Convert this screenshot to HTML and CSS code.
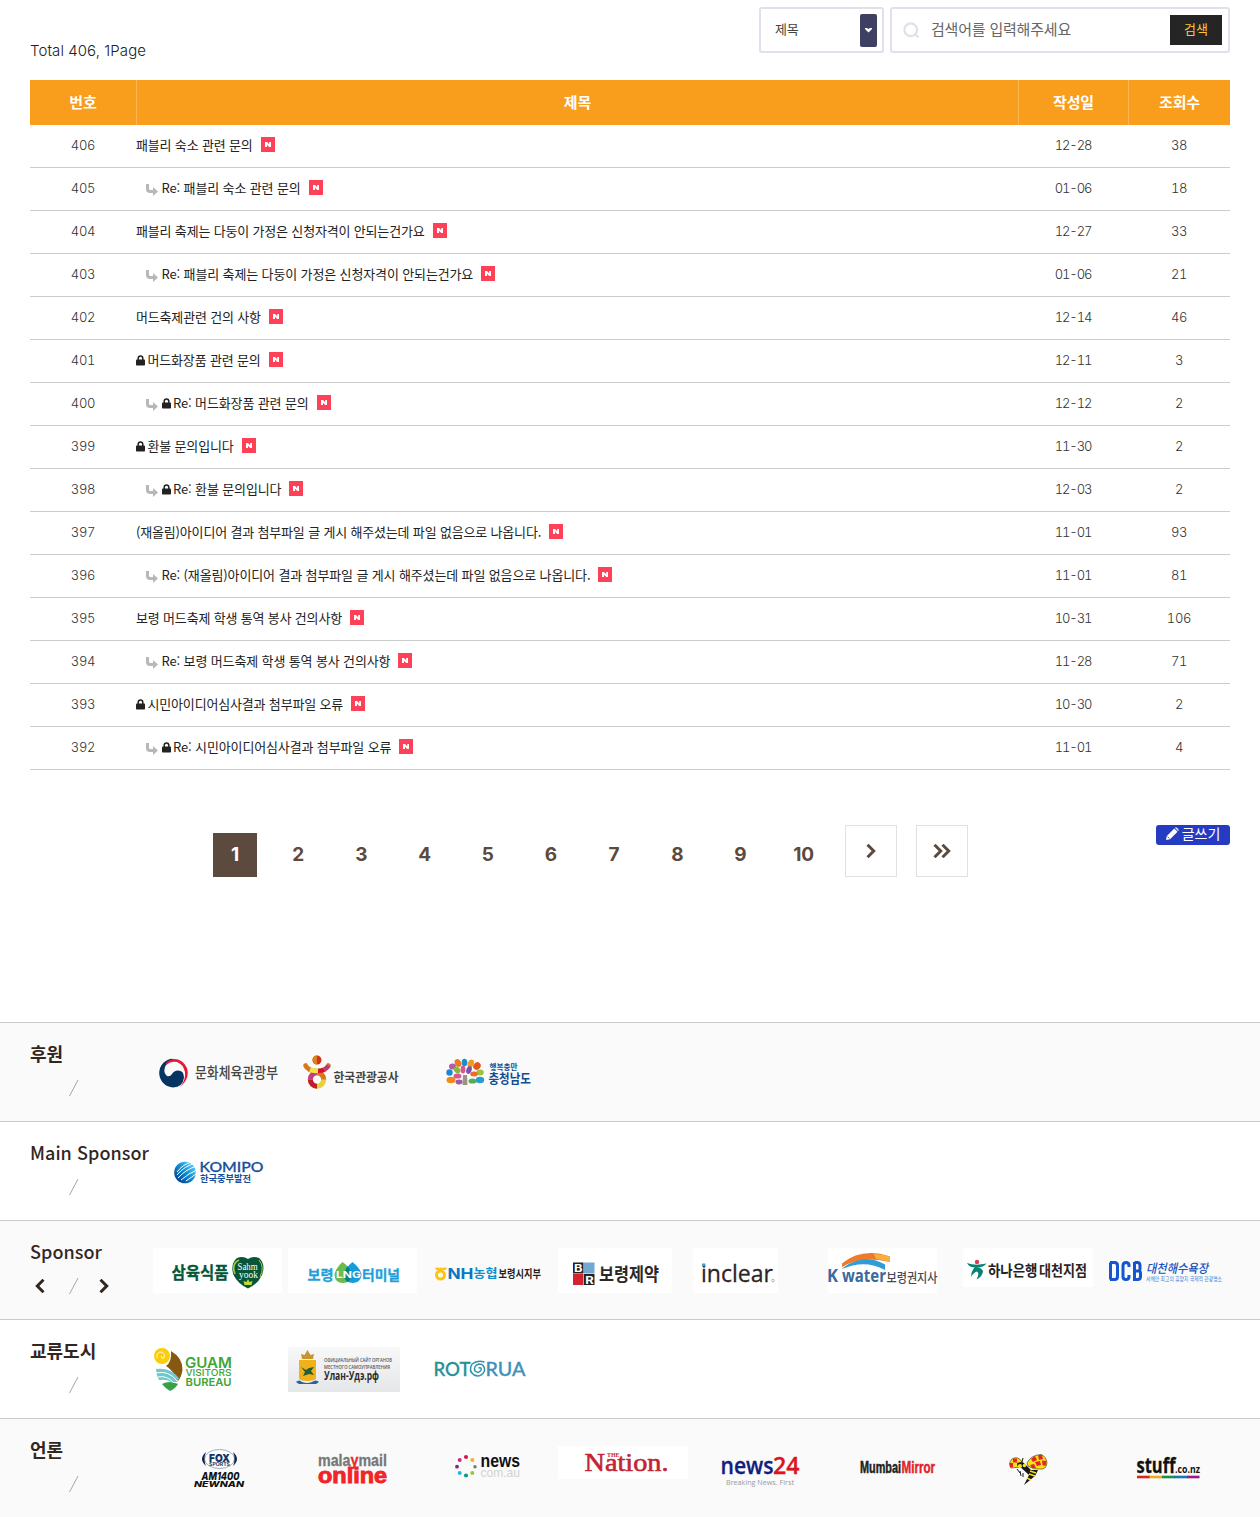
FILE: index.html
```html
<!DOCTYPE html>
<html lang="ko">
<head>
<meta charset="utf-8">
<title>게시판</title>
<link rel="stylesheet" href="styles.css">
</head>
<body>
<svg class="defs" width="0" height="0">
  <symbol id="new" viewBox="0 0 14 15"><rect width="14" height="15" fill="#ff4157"/><path d="M4 10V5h2l2.200 2.300V5H10v5H8.200L6 7.700V10z" fill="#fff"/></symbol>
  <symbol id="lock" viewBox="0 0 9 11"><path d="M2.200 5V3.200a2.300 2.300 0 0 1 4.600 0V5" fill="none" stroke="#222" stroke-width="1.500"/><rect x="0" y="4.600" width="9" height="5.900" rx=".8" fill="#222"/></symbol>
  <symbol id="reply" viewBox="0 0 12 12"><path d="M0 0h3v4.500q0 1.500 1.500 1.500H7V3l5 4.600L7 12V9H4Q0 9 0 5z" fill="#b8b8b8"/></symbol>
  <symbol id="slash" viewBox="0 0 10 16"><path d="M.5 16L9 0" stroke="#aaa5a2" stroke-width="1" fill="none"/></symbol>
  <symbol id="chev" viewBox="0 0 10 14"><path d="M1.500 .8L7.700 7L1.500 13.200" fill="none" stroke="currentColor" stroke-width="3"/></symbol>
</svg>

<main class="board">
  <div class="board-top">
    <p class="total">Total 406, 1Page</p>
    <form class="search">
      <div class="select"><span>제목</span><i class="handle"><svg width="7" height="5" viewBox="0 0 7 5"><path d="M0 0h2l1.500 1L5 0h2v1L3.500 4.500L0 1z" fill="#fff"/></svg></i></div>
      <div class="field">
        <svg width="17" height="17" viewBox="0 0 17 17"><circle cx="7.700" cy="7.700" r="6.300" fill="none" stroke="#e1dfec" stroke-width="2.200"/><path d="M11.500 11.500l4 4" stroke="#e1dfec" stroke-width="2.200"/></svg>
        <span class="hint">검색어를 입력해주세요</span>
        <button type="button">검색</button>
      </div>
    </form>
  </div>

  <table class="list">
    <thead><tr><th class="c-no">번호</th><th>제목</th><th class="c-date">작성일</th><th class="c-hit">조회수</th></tr></thead>
    <tbody>
      <tr><td>406</td><td><div class="t">패블리 숙소 관련 문의<svg class="new"><use href="#new"/></svg></div></td><td>12-28</td><td>38</td></tr>
      <tr><td>405</td><td><div class="t re"><svg class="reply"><use href="#reply"/></svg>Re: 패블리 숙소 관련 문의<svg class="new"><use href="#new"/></svg></div></td><td>01-06</td><td>18</td></tr>
      <tr><td>404</td><td><div class="t">패블리 축제는 다둥이 가정은 신청자격이 안되는건가요<svg class="new"><use href="#new"/></svg></div></td><td>12-27</td><td>33</td></tr>
      <tr><td>403</td><td><div class="t re"><svg class="reply"><use href="#reply"/></svg>Re: 패블리 축제는 다둥이 가정은 신청자격이 안되는건가요<svg class="new"><use href="#new"/></svg></div></td><td>01-06</td><td>21</td></tr>
      <tr><td>402</td><td><div class="t">머드축제관련 건의 사항<svg class="new"><use href="#new"/></svg></div></td><td>12-14</td><td>46</td></tr>
      <tr><td>401</td><td><div class="t"><svg class="lock"><use href="#lock"/></svg>머드화장품 관련 문의<svg class="new"><use href="#new"/></svg></div></td><td>12-11</td><td>3</td></tr>
      <tr><td>400</td><td><div class="t re"><svg class="reply"><use href="#reply"/></svg><svg class="lock"><use href="#lock"/></svg>Re: 머드화장품 관련 문의<svg class="new"><use href="#new"/></svg></div></td><td>12-12</td><td>2</td></tr>
      <tr><td>399</td><td><div class="t"><svg class="lock"><use href="#lock"/></svg>환불 문의입니다<svg class="new"><use href="#new"/></svg></div></td><td>11-30</td><td>2</td></tr>
      <tr><td>398</td><td><div class="t re"><svg class="reply"><use href="#reply"/></svg><svg class="lock"><use href="#lock"/></svg>Re: 환불 문의입니다<svg class="new"><use href="#new"/></svg></div></td><td>12-03</td><td>2</td></tr>
      <tr><td>397</td><td><div class="t">(재올림)아이디어 결과 첨부파일 글 게시 해주셨는데 파일 없음으로 나옵니다.<svg class="new"><use href="#new"/></svg></div></td><td>11-01</td><td>93</td></tr>
      <tr><td>396</td><td><div class="t re"><svg class="reply"><use href="#reply"/></svg>Re: (재올림)아이디어 결과 첨부파일 글 게시 해주셨는데 파일 없음으로 나옵니다.<svg class="new"><use href="#new"/></svg></div></td><td>11-01</td><td>81</td></tr>
      <tr><td>395</td><td><div class="t">보령 머드축제 학생 통역 봉사 건의사항<svg class="new"><use href="#new"/></svg></div></td><td>10-31</td><td>106</td></tr>
      <tr><td>394</td><td><div class="t re"><svg class="reply"><use href="#reply"/></svg>Re: 보령 머드축제 학생 통역 봉사 건의사항<svg class="new"><use href="#new"/></svg></div></td><td>11-28</td><td>71</td></tr>
      <tr><td>393</td><td><div class="t"><svg class="lock"><use href="#lock"/></svg>시민아이디어심사결과 첨부파일 오류<svg class="new"><use href="#new"/></svg></div></td><td>10-30</td><td>2</td></tr>
      <tr><td>392</td><td><div class="t re"><svg class="reply"><use href="#reply"/></svg><svg class="lock"><use href="#lock"/></svg>Re: 시민아이디어심사결과 첨부파일 오류<svg class="new"><use href="#new"/></svg></div></td><td>11-01</td><td>4</td></tr>
    </tbody>
  </table>

  <div class="board-foot">
    <nav class="pager">
      <b class="on">1</b><b>2</b><b>3</b><b>4</b><b>5</b><b>6</b><b>7</b><b>8</b><b>9</b><b>10</b>
      <a class="step"><svg width="10" height="14"><use href="#chev"/></svg></a>
      <a class="step"><svg width="18" height="14" viewBox="0 0 18 14"><path d="M1.500 .8L7.700 7L1.500 13.200M9.500 .8L15.700 7L9.500 13.200" fill="none" stroke="#5d4a3e" stroke-width="3"/></svg></a>
    </nav>
    <a class="write"><svg width="13" height="13" viewBox="0 0 13 13"><path d="M0 13l.8-4L8.300 1.500l3.200 3.200L4 12.200zM9 .8q.8-1 1.800 0l1.400 1.400q1 .9 0 1.800z" fill="#fff"/><path d="M1.500 9.500l2 2" stroke="#253bc1" stroke-width=".7"/></svg>글쓰기</a>
  </div>
</main>

<footer class="partners">
  <section class="band gray">
    <div class="label"><h2>후원</h2><div class="nav"><svg class="slash"><use href="#slash"/></svg></div></div>
    <div class="logos">
      <svg class="logo" viewBox="0 0 135 98">
        <path d="M17 36A14.500 14.500 0 0 0 20 64.500Q30 64 31 54.500Q31 47.500 25 47.500Q21 47.500 19 51Q17 54 14 53Q10 50 12 44Q14 39 21 36.500Q19 35.500 17 36z" fill="#06335f"/>
        <path d="M13 40Q20 33 29 38.500Q36 44 34.500 53Q33 59 27 64Q33 57 32 49Q30 41 24 39Q18 37.500 13 42z" fill="#e71939"/>
        <text x="42" y="55" textLength="83" font-size="15" fill="#444" font-weight="500" lengthAdjust="spacingAndGlyphs">문화체육관광부</text>
      </svg>
      <svg class="logo" viewBox="0 0 135 98">
        <circle cx="29" cy="37" r="4.500" fill="#d9301f"/><path d="M29 32.500a4.500 4.500 0 0 0 0 9z" fill="#d98316"/>
        <circle cx="29" cy="56.500" r="6.700" fill="none" stroke="#e8d13a" stroke-width="5"/>
        <path d="M29 49.800a6.700 6.700 0 0 0-6.700 6.700" fill="none" stroke="#c63a87" stroke-width="5"/><path d="M22.300 56.500a6.700 6.700 0 0 0 6.700 6.700" fill="none" stroke="#c11d28" stroke-width="5"/><path d="M35.700 56.500a6.700 6.700 0 0 0-6.700-6.700" fill="none" stroke="#d9771a" stroke-width="5"/>
        <path d="M17.500 42.500Q20 48 29 48Q38 48 40.500 42.500" fill="none" stroke="#d9771a" stroke-width="4.600" stroke-linecap="round"/>
        <path d="M22 46.800Q26 48 30 48" stroke="#efe244" stroke-width="4.600" fill="none"/><path d="M30 48Q34 48 36 46.500" stroke="#d2122c" stroke-width="4.600" fill="none"/><path d="M36.500 46.300Q39 45 40.500 42.500" stroke="#b43a86" stroke-width="4.300" fill="none"/>
        <text x="45.500" y="59" textLength="65" font-size="12.500" fill="#444" font-weight="700" lengthAdjust="spacingAndGlyphs">한국관광공사</text>
      </svg>
      <svg class="logo" viewBox="0 0 135 98">
        <path d="M40 52l4 0 .5 10h-5z" fill="#9b9484"/>
        <ellipse cx="26.500" cy="49.500" rx="3.200" ry="3.200" fill="#1889d4"/><ellipse cx="28" cy="57" rx="4.500" ry="3.200" fill="#f18b19"/><ellipse cx="29.500" cy="43.500" rx="3.500" ry="3" fill="#b25ca7"/>
        <ellipse cx="35" cy="40" rx="3.200" ry="4" fill="#ec7a25" transform="rotate(-25 35 40)"/><ellipse cx="41.500" cy="39.500" rx="2.800" ry="3.800" fill="#198fcf"/><ellipse cx="48" cy="40.500" rx="3" ry="4" fill="#f19a21" transform="rotate(25 48 40)"/>
        <ellipse cx="54" cy="43" rx="3.500" ry="4" fill="#e2571e" transform="rotate(40 54 43)"/><ellipse cx="57" cy="49.500" rx="3.800" ry="3" fill="#9cc33b"/><ellipse cx="57" cy="57" rx="4.200" ry="3.200" fill="#2b9ad1"/>
        <ellipse cx="34" cy="47" rx="3.800" ry="2.800" fill="#86b83c" transform="rotate(40 34 47)"/><ellipse cx="40" cy="46.500" rx="2.400" ry="4" fill="#d65698"/><ellipse cx="46" cy="47" rx="2.600" ry="4" fill="#7755a5" transform="rotate(20 46 47)"/><ellipse cx="51" cy="51" rx="3.800" ry="2.500" fill="#ed6b2b"/><ellipse cx="34.500" cy="53" rx="4" ry="2.600" fill="#d65698"/><ellipse cx="49.500" cy="58" rx="4" ry="2.600" fill="#55ac52"/><ellipse cx="36" cy="59" rx="3.500" ry="2.400" fill="#9d5aa6"/>
        <text x="66.500" y="46.500" textLength="28" font-size="8" fill="#144b91" font-weight="700" lengthAdjust="spacingAndGlyphs">행복충만</text>
        <text x="65.500" y="59.500" textLength="42.500" font-size="13" fill="#144b91" font-weight="700" lengthAdjust="spacingAndGlyphs">충청남도</text>
      </svg>
    </div>
  </section>

  <section class="band">
    <div class="label"><h2 class="en">Main Sponsor</h2><div class="nav"><svg class="slash"><use href="#slash"/></svg></div></div>
    <div class="logos">
      <svg class="logo" viewBox="0 0 135 98">
        <defs><linearGradient id="kg" x1="1" y1="0" x2="0" y2="1"><stop offset=".1" stop-color="#5fd0f5"/><stop offset=".5" stop-color="#0a8bd2"/><stop offset=".9" stop-color="#073d8b"/></linearGradient></defs>
        <circle cx="32" cy="50.500" r="10.800" fill="url(#kg)"/>
        <g stroke="#fff" stroke-width="1" fill="none"><path d="M24 50Q30 42 39 40M24 53Q31 44 43 41M25 56Q33 47 44 44M28 58Q36 51 44 48M33 59Q39 55 44 51"/></g>
        <text x="46.500" y="50.300" class="la" textLength="64" font-size="14" fill="#164f9c" stroke="#164f9c" stroke-width=".3" font-weight="500" lengthAdjust="spacingAndGlyphs">KOMIPO</text>
        <text x="47" y="59.500" textLength="51" font-size="9.500" fill="#164f9c" font-weight="700" lengthAdjust="spacingAndGlyphs">한국중부발전</text>
      </svg>
    </div>
  </section>

  <section class="band gray">
    <div class="label"><h2 class="en">Sponsor</h2><div class="nav"><svg class="arrow prev"><use href="#chev"/></svg><svg class="slash"><use href="#slash"/></svg><svg class="arrow"><use href="#chev"/></svg></div></div>
    <div class="logos">
      <svg class="logo" viewBox="0 0 135 98">
        <rect y="27" width="129" height="45" fill="#fff"/>
        <text x="18.500" y="58" textLength="57" font-size="17" fill="#05573a" stroke="#05573a" stroke-width=".3" font-weight="700" lengthAdjust="spacingAndGlyphs">삼육식품</text>
        <path d="M95 38Q90 34.500 84 37Q77 43 80.500 54Q85 63 95 67.500Q105 63 109 54Q113 43 106 37Q100 34.500 95 38z" fill="#07563a"/>
        <path d="M82 53Q78 43 86 39" fill="none" stroke="#a7ce3a" stroke-width="1.600"/><path d="M106 39Q112 46 107 56" fill="none" stroke="#a7ce3a" stroke-width="1"/>
        <text x="84.500" y="48.500" class="se" textLength="20" font-size="11" fill="#fff" lengthAdjust="spacingAndGlyphs">Sahm</text><text x="86" y="57" class="se" textLength="19" font-size="11" fill="#fff" lengthAdjust="spacingAndGlyphs">yook</text>
        <path d="M95 58l1.500 3 3-1-1 4h-7l-1-4 3 1z" fill="#c5d92d"/>
      </svg>
      <svg class="logo" viewBox="0 0 135 98">
        <rect y="27" width="129" height="45" fill="#fff"/>
        <path d="M54.500 41Q47 48 46.500 54Q47 62 55 62Q63 62 64 54Q63 47 54.500 41z" fill="#6abb50"/><path d="M64.500 41Q56 48 56 54Q57 62 65 62Q73 61 73.500 54Q73 48 64.500 41z" fill="#169cdb"/><path d="M59.500 45Q63 50 63.500 54Q63 59 59.500 61Q56 58 56 54Q57 49 59.500 45z" fill="#087f81"/>
        <text x="19.500" y="58.500" textLength="26" font-size="14" fill="#239edb" font-weight="700" stroke="#239edb" stroke-width=".3" lengthAdjust="spacingAndGlyphs">보령</text><text x="74" y="58.500" textLength="38" font-size="14" fill="#239edb" font-weight="700" stroke="#239edb" stroke-width=".3" lengthAdjust="spacingAndGlyphs">터미널</text>
        <text x="48" y="56.500" class="in" textLength="25" font-size="9.500" fill="#fff" font-weight="700" lengthAdjust="spacingAndGlyphs">LNG</text>
      </svg>
      <svg class="logo" viewBox="0 0 135 98">
        <circle cx="17.500" cy="54" r="4" fill="none" stroke="#fbc40d" stroke-width="3"/><path d="M12 46l2 1.200 1-1.200 1.800 1.500L18 46l1.200 1.500L21 46l.8 1.200L24 46l-1 3H13z" fill="#fbc40d"/>
        <text x="24.500" y="57.500" class="in" textLength="26" font-size="14" fill="#0878c1" font-weight="700" lengthAdjust="spacingAndGlyphs">NH</text><text x="50.500" y="57" textLength="24" font-size="12.500" fill="#1290cd" font-weight="700" lengthAdjust="spacingAndGlyphs">농협</text>
        <text x="75.500" y="57" textLength="42.500" font-size="11" fill="#222" font-weight="700" lengthAdjust="spacingAndGlyphs">보령시지부</text>
      </svg>
      <svg class="logo" viewBox="0 0 135 98">
        <rect y="27" width="114" height="45" fill="#fff"/>
        <rect x="15" y="41.500" width="10.500" height="11" fill="#262122"/><rect x="26" y="41.500" width="10.500" height="11" fill="#73a8d2"/><rect x="15" y="53" width="10.500" height="11" fill="#d2232e"/><rect x="26" y="53" width="10.500" height="11" fill="#262122"/>
        <text x="16" y="50.800" class="in" font-size="10.500" font-weight="700" fill="#fff" textLength="8.500" lengthAdjust="spacingAndGlyphs">B</text><text x="27.200" y="62.500" class="in" font-size="10.500" font-weight="700" fill="#fff" textLength="8.500" lengthAdjust="spacingAndGlyphs">R</text>
        <text x="41" y="59.500" textLength="60" font-size="18" fill="#2c2829" font-weight="700" lengthAdjust="spacingAndGlyphs">보령제약</text>
      </svg>
      <svg class="logo" viewBox="0 0 135 98">
        <rect y="27" width="85" height="45" fill="#fff"/>
        <text x="8" y="61" class="os" textLength="72" font-size="24" fill="#2c2526" stroke="#2c2526" stroke-width=".3" lengthAdjust="spacingAndGlyphs">inclear</text><rect x="9" y="42.500" width="3.400" height="2.600" fill="#32a8dc"/><circle cx="80" cy="59.500" r="1.300" fill="none" stroke="#888" stroke-width=".6"/>
      </svg>
      <svg class="logo" viewBox="0 0 135 98">
        <rect y="27" width="109" height="45" fill="#fff"/>
        <path d="M14 42.500Q34 26 62 35.500V41Q34 34 14 46z" fill="#f07a2b"/><path d="M46 33Q55 33 62 35.500V41Q56 39 48 38z" fill="#f8b03c"/><path d="M16 46Q37 32 57 43.500V49Q37 38 14 48z" fill="#2f9cda"/>
        <text x="-1" y="60.500" class="os" textLength="11" font-size="17" fill="#39699d" font-weight="700" lengthAdjust="spacingAndGlyphs">K</text><text x="14" y="60.500" class="os" textLength="44" font-size="18" fill="#39699d" font-weight="700" lengthAdjust="spacingAndGlyphs">water</text>
        <text x="58.500" y="61" textLength="51" font-size="13" fill="#454a52" font-weight="500" lengthAdjust="spacingAndGlyphs">보령권지사</text>
      </svg>
      <svg class="logo" viewBox="0 0 135 98">
        <rect y="27" width="130" height="39" fill="#fff"/>
        <circle cx="14" cy="41" r="2.200" fill="#e2365a"/><path d="M4 42Q12 45 23.500 42.500Q20 47 13 46.500Q6 46.500 4 42z" fill="#078276"/><path d="M12 46Q8 50 8 56Q11 51 14 50.500Q17 52 13.500 58.500Q20 55 20 50Q18 46 12 46z" fill="#078276"/>
        <text x="25" y="55.300" textLength="49.500" font-size="15" fill="#222" font-weight="700" lengthAdjust="spacingAndGlyphs">하나은행</text><text x="76" y="55.300" textLength="48" font-size="15" fill="#2f2421" font-weight="700" lengthAdjust="spacingAndGlyphs">대천지점</text>
      </svg>
      <svg class="logo" viewBox="0 0 135 98">
        <g fill="none" stroke="#1456cf" stroke-width="3"><path d="M12.500 41.500V58.500M12 41.500h4.500q3 0 3 3v11q0 3-3 3H12M31 46v-1.500q0-3-3-3t-3 3v11q0 3 3 3t3-3V54M36.500 41v17.500h3q3 0 3-3V52q0-2-2-2h-4h3q2.500 0 2.500-2v-3.500q0-3-2.500-3h-3"/></g>
        <text x="48" y="51.500" textLength="62" font-size="12.500" fill="#1752be" font-style="italic" font-weight="500" lengthAdjust="spacingAndGlyphs">대천해수욕장</text>
        <text x="48" y="60" textLength="76" font-size="6" fill="#4d86d8" lengthAdjust="spacingAndGlyphs">서해안 최고의 휴양지 국제적 관광명소</text>
      </svg>
    </div>
  </section>

  <section class="band">
    <div class="label"><h2>교류도시</h2><div class="nav"><svg class="slash"><use href="#slash"/></svg></div></div>
    <div class="logos">
      <svg class="logo" viewBox="0 0 135 98">
        <path d="M18 31Q30 38 29.500 50Q28 58 25 61Q20 50 13 46Q19 42 18 31z" fill="#87580f"/><circle cx="9" cy="36" r="8" fill="#fbce09"/><path d="M4 38Q3 32 9 32Q13 34 11 38Q8 39 8 36" fill="none" stroke="#fff" stroke-width=".8"/>
        <path d="M3 49Q17 47 26 58L24 62H18Q14 59 6 60Q3 55 3 49z" fill="#70c7cd"/><path d="M9 64Q16 60 25 64Q22 69 17 71Q12 68 9 64z" fill="#36a149"/><path d="M3 53Q16 50 24 61M5 57Q14 55 21 63" fill="none" stroke="#fff" stroke-width="1"/>
        <g fill="#3fa535" class="in"><text x="32" y="47.500" textLength="47" font-size="15" font-weight="600" lengthAdjust="spacingAndGlyphs">GUAM</text><text x="32.500" y="56.300" textLength="46" font-size="9.500" font-weight="500" lengthAdjust="spacingAndGlyphs">VISITORS</text><text x="32.500" y="65.500" textLength="46" font-size="11" font-weight="600" lengthAdjust="spacingAndGlyphs">BUREAU</text></g>
      </svg>
      <svg class="logo" viewBox="0 0 135 98">
        <defs><linearGradient id="ug" x1="0" y1="0" x2="0" y2="1"><stop offset="0" stop-color="#f8f8f9"/><stop offset="1" stop-color="#e5e6e8"/></linearGradient></defs>
        <rect y="27" width="112" height="45" fill="url(#ug)"/>
        <path d="M14 39l-1-5 3.500 1L19.500 30l3 5 3.500-1-1 5z" fill="#c99429"/><path d="M11 40h17v18q0 3-8.500 3Q11 61 11 58z" fill="#efb21b"/><path d="M13 47l5 3 3-2 5-1-3 4 3 4-5-1-6 2 2-4z" fill="#275b31"/><path d="M8 62q3-3 6 0 5 2 10 0 4-3 7 0l-3 2H11z" fill="#2462a8"/>
        <g class="os" fill="#555"><text x="36" y="42.300" textLength="68" font-size="5.200" font-weight="600" lengthAdjust="spacingAndGlyphs">ОФИЦИАЛЬНЫЙ САЙТ ОРГАНОВ</text><text x="36" y="49" textLength="66" font-size="5.200" font-weight="600" lengthAdjust="spacingAndGlyphs">МЕСТНОГО САМОУПРАВЛЕНИЯ</text><text x="36" y="59.500" textLength="55" font-size="12" font-weight="700" fill="#2b2b2d" lengthAdjust="spacingAndGlyphs">Улан-Удэ.рф</text></g>
      </svg>
      <svg class="logo" viewBox="0 0 135 98">
        <g class="la" font-size="20" font-weight="500" stroke-width=".3"><text x="10.500" y="55.500" textLength="37" fill="#229394" stroke="#229394" lengthAdjust="spacingAndGlyphs">ROT</text><text x="62.500" y="55.500" textLength="40" fill="#3e91bd" stroke="#3e91bd" lengthAdjust="spacingAndGlyphs">RUA</text></g>
        <path d="M61.500 42Q54 40 49 44Q45 51 51 55Q58 58 61.500 51Q62 44 56 44Q50 46 52 51Q56 54 58 50Q59 47 55.500 48" fill="none" stroke="#2e92a9" stroke-width="1.500"/>
      </svg>
    </div>
  </section>

  <section class="band gray">
    <div class="label"><h2>언론</h2><div class="nav"><svg class="slash"><use href="#slash"/></svg></div></div>
    <div class="logos">
      <svg class="logo" viewBox="0 0 135 98">
        <ellipse cx="66.500" cy="40" rx="15" ry="9.500" fill="#fff" stroke="#9daec5" stroke-width="1"/><path d="M53 33q-8 7 0 14q-3-7 0-14zM80 33q8 7 0 14q3-7 0-14z" fill="#12264f"/>
        <text x="56" y="42.500" class="in" textLength="21" font-size="11" font-weight="900" fill="#153668" lengthAdjust="spacingAndGlyphs">FOX</text><text x="56" y="47" class="in" textLength="21" font-size="4.500" font-weight="700" fill="#153668" lengthAdjust="spacingAndGlyphs">SPORTS</text>
        <g class="in" font-weight="800" font-style="italic" fill="#111"><text x="48.500" y="61" textLength="38" font-size="10.500" lengthAdjust="spacingAndGlyphs">AM1400</text><text x="41" y="68" textLength="50" font-size="7.500" lengthAdjust="spacingAndGlyphs">NEWNAN</text></g>
      </svg>
      <svg class="logo" viewBox="0 0 135 98">
        <g class="li" font-weight="700"><text x="30" y="46.500" textLength="69" font-size="17" fill="#777" stroke="#777" stroke-width=".3" lengthAdjust="spacingAndGlyphs">mala<tspan fill="#ee2525" stroke="#ee2525">y</tspan>mail</text><text x="30" y="64" textLength="69" font-size="22" fill="#f22428" stroke="#f22428" stroke-width=".9" lengthAdjust="spacingAndGlyphs">online</text></g>
      </svg>
      <svg class="logo" viewBox="0 0 135 98">
        <circle cx="43" cy="38" r="2.100" fill="#d01c48"/><circle cx="49.300" cy="41" r="2" fill="#f3b229"/><circle cx="52" cy="47.700" r="1.700" fill="#777"/><circle cx="49.300" cy="54" r="2" fill="#95c93d"/><circle cx="43" cy="56.500" r="2.100" fill="#139b86"/><circle cx="36.700" cy="54" r="2" fill="#28b5df"/><circle cx="34" cy="47.700" r="1.900" fill="#742b8f"/><circle cx="36.700" cy="41" r="2" fill="#c92c7e"/>
        <g class="li"><text x="57.500" y="48.200" textLength="39.500" font-size="18" font-weight="700" fill="#111" lengthAdjust="spacingAndGlyphs">news</text><text x="57.500" y="58" textLength="39.500" font-size="13" fill="#d2d2d2" lengthAdjust="spacingAndGlyphs">com.au</text></g>
      </svg>
      <svg class="logo" viewBox="0 0 135 98">
        <rect y="27" width="130" height="33" fill="#fff"/>
        <g class="se" fill="#c32334"><text x="26.500" y="51.500" textLength="84" font-size="26" stroke="#c32334" stroke-width=".6" lengthAdjust="spacingAndGlyphs">Nation.</text><text x="49" y="37.500" textLength="12.500" font-size="6" font-weight="700" lengthAdjust="spacingAndGlyphs">THE</text></g>
      </svg>
      <svg class="logo" viewBox="0 0 135 98">
        <g class="os" font-weight="600" font-size="23"><text x="27.500" y="55" textLength="53" fill="#10207c" stroke="#10207c" stroke-width=".3" lengthAdjust="spacingAndGlyphs">news</text><text x="80" y="55" textLength="26.500" fill="#db1420" stroke="#db1420" stroke-width=".3" lengthAdjust="spacingAndGlyphs">24</text></g><text x="33" y="66" class="os" textLength="68" font-size="6.500" fill="#999" lengthAdjust="spacingAndGlyphs">Breaking News. First</text>
      </svg>
      <svg class="logo" viewBox="0 0 135 98">
        <g class="li" font-weight="700" font-size="16"><text x="32" y="54" textLength="41" fill="#211d20" stroke="#211d20" stroke-width=".5" lengthAdjust="spacingAndGlyphs">Mumbai</text><text x="73.500" y="54" textLength="33.500" fill="#e2222d" stroke="#e2222d" stroke-width=".5" lengthAdjust="spacingAndGlyphs">Mirror</text></g>
      </svg>
      <svg class="logo" viewBox="0 0 135 98">
        <path d="M58 48L48 49Q45 44 49 40Q55 36 60 44zM64 44Q68 36 78 35.500Q83 37 84 44Q83 51 77 50Q70 51 65 47z" fill="#f8e11a" stroke="#3a2710" stroke-width=".6"/>
        <path d="M50 39.500l4 0 0 4-4 0zM46.500 44l3.500 0 0 4-3 .5zM54 43.500l4 .5-1 3-3 0zM68 40l4-3 2 4-4 2zM75 36l4 0 1 4-4 1zM72 43l5-1 1 4-4 1zM79 41.500l4.500.5-1 5-3-1zM67 46l4-1 2 4-4 0z" fill="#e32624"/>
        <path d="M54 45q4-4 8 0l3 3 3 3 7 0-3 6-11 9 5-10z" fill="#181818"/><circle cx="57" cy="47" r="2" fill="#f8e11a"/><circle cx="61.500" cy="46.500" r="1.800" fill="#f8e11a"/><path d="M67 52l6 2M66 55l6 2M64 59l4 2" stroke="#f8e11a" stroke-width="1.400"/><path d="M54 50l3 4M57 52l1 5M60 54l0 4M60 39l-1 4" stroke="#181818" stroke-width="1" fill="none"/>
      </svg>
      <svg class="logo" viewBox="0 0 135 98">
        <g class="os" fill="#111" font-weight="700"><text x="38.500" y="54" textLength="39" font-size="21" stroke="#111" stroke-width=".3" lengthAdjust="spacingAndGlyphs">stuff</text><text x="77" y="54" textLength="25" font-size="11" lengthAdjust="spacingAndGlyphs">.co.nz</text></g>
        <path d="M39 58h13" stroke="#dc241f" stroke-width="2.600"/><path d="M51.500 58h13" stroke="#f6a71c" stroke-width="2.600"/><path d="M64 58h13" stroke="#159148" stroke-width="2.600"/><path d="M76.500 58h13" stroke="#1a73bb" stroke-width="2.600"/><path d="M89 58h12.500" stroke="#971b82" stroke-width="2.600"/>
      </svg>
    </div>
  </section>
</footer>
</body>
</html>
```
FILE: styles.css
```css
* { box-sizing: border-box; margin: 0; padding: 0; }
body { font-family: "Noto Sans CJK KR", sans-serif; color: #222; background: #fff; }
.defs { display: block; height: 0; }
svg { flex: none; }
.board { padding: 0 30px; height: 1022px; }
.board-top { display: flex; justify-content: space-between; height: 80px; }
.total { font: 300 15px/20px Inter, sans-serif; padding-top: 41px; letter-spacing: .08px; }
.search { display: flex; gap: 6px; padding-top: 7px; }
.select, .field { display: flex; align-items: center; height: 46px; border: 2px solid #e1dfec; border-radius: 3px; }
.select { width: 125px; justify-content: space-between; padding: 0 5px 0 14px; font-size: 13px; color: #444; }
.select span { padding-bottom: 4px; letter-spacing: -.2px; }
.handle { display: flex; align-items: center; justify-content: center; width: 17px; height: 33px; border-radius: 2px; background: #3d4060; }
.field { width: 340px; padding: 0 6px 0 11px; font-size: 15px; color: #666; }
.hint { flex: 1; padding-left: 11px; padding-bottom: 4px; letter-spacing: -.2px; }
.field button { width: 52px; height: 30px; border: 0; background: #252525; color: #ffc62e; font: 13px/28px "Noto Sans CJK KR", sans-serif; padding-bottom: 2px; }

.list { width: 1200px; border-collapse: separate; border-spacing: 0; table-layout: fixed; }
.list th { height: 45px; background: #f99d1c; color: #fff; font-size: 15px; font-weight: 700; line-height: 20px; padding-bottom: 2px; letter-spacing: -.1px; }
.list th + th { border-left: 1px solid #fbb650; }
.c-no { width: 106px; }
.c-date { width: 110px; }
.c-hit { width: 102px; }
.list td { height: 43px; border-bottom: 1px solid #ccc; text-align: center; font: 300 13px/20px Inter, sans-serif; font-variant-numeric: tabular-nums; letter-spacing: -.3px; color: #333; padding-bottom: 3px; }
.list td:nth-child(2) { padding: 0; }
.list td:nth-child(3) { letter-spacing: -1.100px; }
.t { display: flex; align-items: center; height: 42px; padding-bottom: 2px; font: 400 13px/20px "Noto Sans CJK KR", sans-serif; letter-spacing: -.17px; color: #222; white-space: pre; }
.t.re { padding-left: 10px; letter-spacing: -.13px; }
.new { width: 14px; height: 15px; margin: 0 0 1px 8px; }
.reply { width: 12px; height: 12px; margin: 4px 3.500px 0 0; }
.lock { width: 9px; height: 11px; margin-right: 2.500px; }

.board-foot { display: flex; justify-content: space-between; align-items: flex-start; padding: 55px 0 0 183px; }
.pager { display: flex; align-items: flex-end; gap: 19.200px; color: #5d4a3e; }
.pager b { width: 44px; height: 44px; text-align: center; font: 700 19px/43px Inter, sans-serif; }
.pager .on { background: #5d4a3e; color: #fff; }
.step { display: flex; align-items: center; justify-content: center; width: 52px; height: 52px; border: 1px solid #e1e1dd; }
.write { display: flex; align-items: center; justify-content: center; gap: 3px; width: 74px; height: 20px; border-radius: 3px; background: #253bc1; color: #fff; font-size: 14px; line-height: 16px; padding-bottom: 4px; }

.band { display: flex; height: 99px; border-top: 1px solid #c9c9c9; overflow: hidden; }
.gray { background: #fafafa; }
.label { width: 153px; padding: 18px 0 0 30px; }
.label h2 { font-size: 18px; line-height: 24px; font-weight: 700; color: #33261f; white-space: nowrap; }
.label .en { font-weight: 500; letter-spacing: .05px; }
.nav { display: flex; justify-content: center; align-items: center; gap: 20px; width: 87px; height: 16px; margin-top: 15px; }
.slash { width: 10px; height: 16px; }
.arrow { width: 10px; height: 14px; color: #33261f; }
.prev { transform: scaleX(-1); margin: 0 4px 0 -4px; }
.logos { display: flex; }
.logo { width: 135px; height: 98px; overflow: visible; }
.in { font-family: Inter, sans-serif; }
.la { font-family: Lato, sans-serif; }
.os { font-family: "Open Sans", sans-serif; }
.li { font-family: "Liberation Sans", sans-serif; }
.se { font-family: "Liberation Serif", serif; }
```
